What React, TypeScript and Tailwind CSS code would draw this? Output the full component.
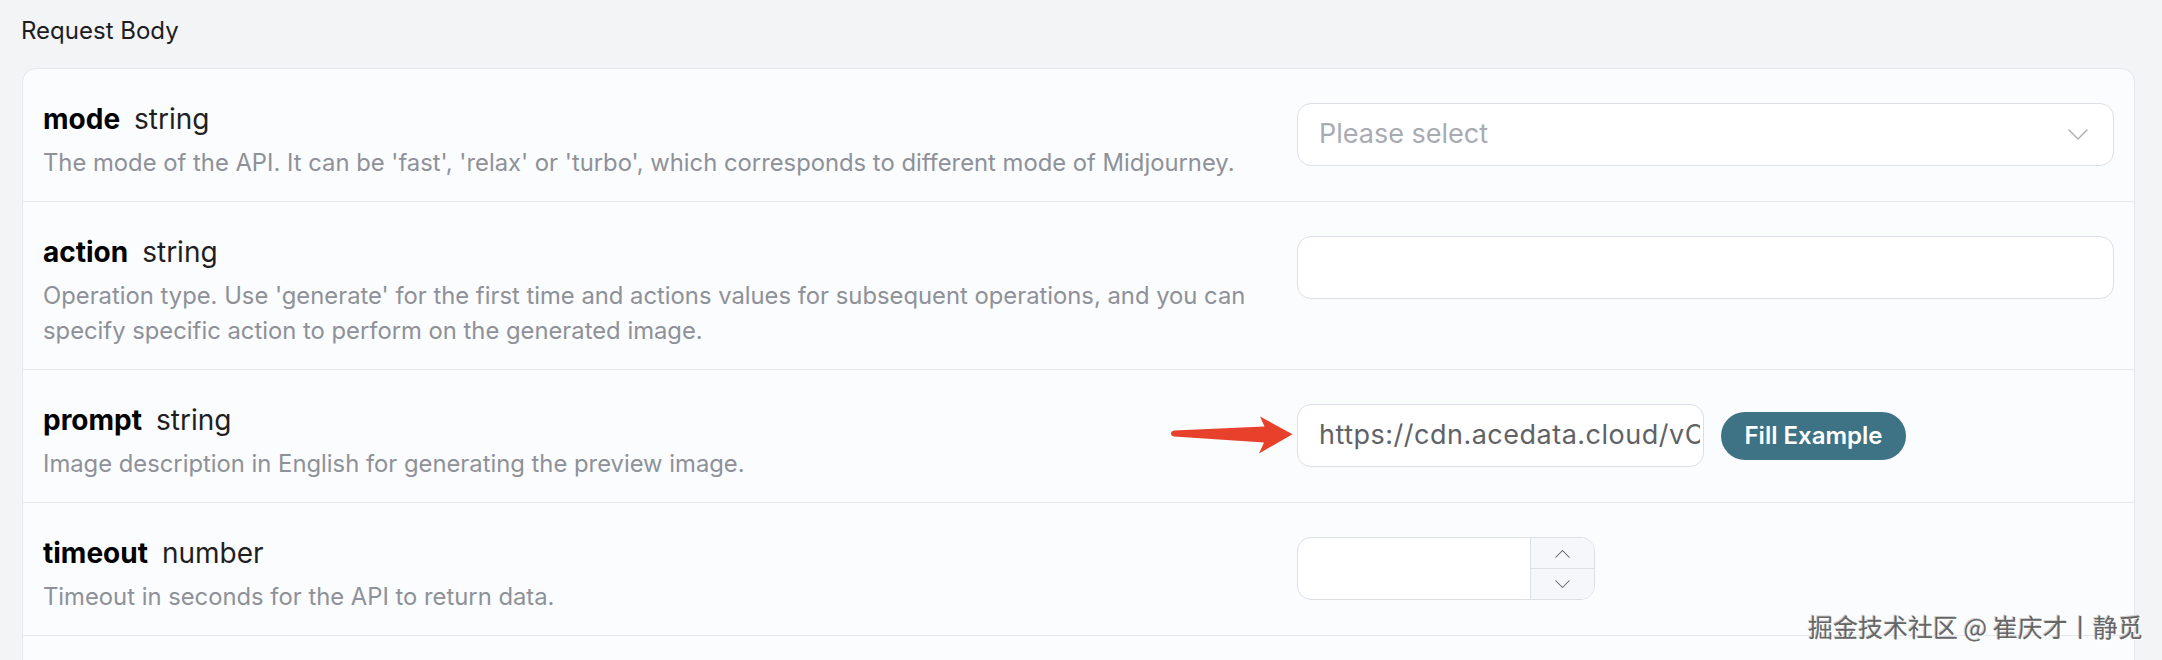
import type { ReactNode } from 'react'

type Field = {
  name: string
  type: string
  desc: string
  control: ReactNode
}

function Chevron({ up = false, className = '' }: { up?: boolean; className?: string }) {
  return (
    <svg viewBox="0 0 20 12" className={className} fill="none">
      <polyline
        points={up ? '1,11 10,2 19,11' : '1,1 10,10 19,1'}
        stroke="currentColor"
        strokeWidth="1.4"
        strokeLinecap="round"
        strokeLinejoin="round"
      />
    </svg>
  )
}

function SelectBox() {
  return (
    <div className="flex h-[63px] w-full items-center justify-between rounded-[14px] border border-[#dcdfe6] bg-white pl-[21px] pr-[25px]">
      <span className="text-[27px] text-[#a8abb2]">Please select</span>
      <Chevron className="h-[12px] w-[20px] text-[#a8abb2]" />
    </div>
  )
}

function TextBox({ value = '', className = '' }: { value?: string; className?: string }) {
  return (
    <div className={`flex h-[63px] items-center rounded-[14px] border border-[#dcdfe6] bg-white pl-[21px] pr-[3px] ${className}`}>
      <div className="flex-1 overflow-hidden">
        <span className="whitespace-nowrap text-[27px] tracking-[0.5px] text-[#606266]">{value}</span>
      </div>
    </div>
  )
}

function PromptControl() {
  return (
    <div className="relative flex items-center">
      <svg viewBox="0 0 122 38" className="absolute left-[-126px] top-[12px] h-[38px] w-[122px]">
        <path
          d="M3,14.6 C0.8,15 0,16.3 0,17.6 C0,19 0.9,20.2 3,20.6 L93,26.5 L88,37.5 L121.5,18.2 L89,0.5 L93.5,10.5 Z"
          fill="#e8412b"
        />
      </svg>
      <TextBox value="https://cdn.acedata.cloud/vC8rGhb2.png" className="w-[407px]" />
      <button className="ml-[17px] h-[48px] w-[185px] rounded-full bg-[#3e7285] text-[24px] font-semibold text-white">
        Fill Example
      </button>
    </div>
  )
}

function NumberBox() {
  return (
    <div className="flex h-[63px] w-[298px] overflow-hidden rounded-[14px] border border-[#dcdfe6] bg-white">
      <div className="flex-1" />
      <div className="flex w-[64px] flex-col border-l border-[#dcdfe6] bg-[#f5f7fa] text-[#606266]">
        <div className="flex flex-1 items-center justify-center border-b border-[#dcdfe6]">
          <Chevron up className="h-[9px] w-[15px]" />
        </div>
        <div className="flex flex-1 items-center justify-center">
          <Chevron className="h-[9px] w-[15px]" />
        </div>
      </div>
    </div>
  )
}

const fields: Field[] = [
  {
    name: 'mode',
    type: 'string',
    desc: "The mode of the API. It can be 'fast', 'relax' or 'turbo', which corresponds to different mode of Midjourney.",
    control: <SelectBox />,
  },
  {
    name: 'action',
    type: 'string',
    desc: "Operation type. Use 'generate' for the first time and actions values for subsequent operations, and you can specify specific action to perform on the generated image.",
    control: <TextBox className="w-full" />,
  },
  {
    name: 'prompt',
    type: 'string',
    desc: 'Image description in English for generating the preview image.',
    control: <PromptControl />,
  },
  {
    name: 'timeout',
    type: 'number',
    desc: 'Timeout in seconds for the API to return data.',
    control: <NumberBox />,
  },
  {
    name: 'callback_url',
    type: 'string',
    desc: 'The URL to receive the result of the task asynchronously.',
    control: <TextBox className="w-full" />,
  },
]

export default function App() {
  return (
    <div className="relative h-[660px] overflow-hidden bg-[#f3f4f6] pl-[21px] pr-[27px] font-[Inter,sans-serif]">
      <div className="h-[68px] pt-[17px] text-[24px] leading-[28px] text-[#1d1d1f]">Request Body</div>
      <div className="ml-px rounded-[14px] border border-[#e4e7ed] bg-[#fbfcfe]">
        {fields.map((f) => (
          <div key={f.name} className="flex items-start border-b border-[#e4e7ed] px-[20px]">
            <div className="flex-1 pb-[21px] pr-[30px] pt-[32px]">
              <div className="text-[28px] leading-[36px] text-[#1f1f1f]">
                <span className="font-bold text-black">{f.name}</span>
                <span className="ml-[14px]">{f.type}</span>
              </div>
              <p className="mt-[8px] text-[23.8px] leading-[35px] text-[#8e9198]">{f.desc}</p>
            </div>
            <div className="w-[817px] shrink-0 pt-[34px]">{f.control}</div>
          </div>
        ))}
      </div>
      <div className="absolute left-[1808px] top-[608px] whitespace-nowrap font-['Noto_Sans_CJK_SC',sans-serif] text-[25px] leading-[36px] text-[#666666] [text-shadow:1px_1px_0_#ffffff,-1px_-1px_0_#cfcfcf]">
        掘金技术社区 @ 崔庆才丨静觅
      </div>
    </div>
  )
}
